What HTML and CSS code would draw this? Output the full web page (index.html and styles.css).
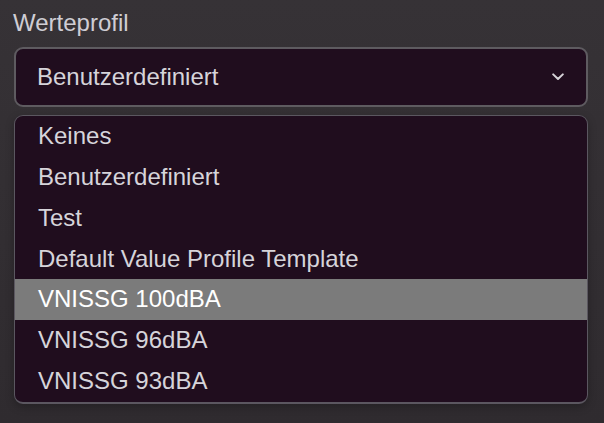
FILE: index.html
```html
<!DOCTYPE html>
<html lang="de">
<head>
<meta charset="utf-8">
<title>Werteprofil</title>
<link rel="stylesheet" href="styles.css">
</head>
<body>
<div class="field">
  <label class="field-label">Werteprofil</label>
  <div class="select">
    <span class="select-value">Benutzerdefiniert</span>
    <svg class="chevron" width="12" height="8" viewBox="0 0 12 8" aria-hidden="true">
      <path d="M1.2 1.4 L6 6 L10.8 1.4" fill="none" stroke="#d6d3d8" stroke-width="2" stroke-linecap="round" stroke-linejoin="round"/>
    </svg>
  </div>
  <ul class="menu">
    <li class="option">Keines</li>
    <li class="option">Benutzerdefiniert</li>
    <li class="option">Test</li>
    <li class="option">Default Value Profile Template</li>
    <li class="option active">VNISSG 100dBA</li>
    <li class="option">VNISSG 96dBA</li>
    <li class="option">VNISSG 93dBA</li>
  </ul>
</div>
</body>
</html>
```

FILE: styles.css
```css
html, body {
  margin: 0;
  padding: 0;
}
body {
  width: 604px;
  height: 423px;
  overflow: hidden;
  background: linear-gradient(#363236, #2f2b2f);
  font-family: "Liberation Sans", Arial, sans-serif;
  font-size: 24px;
  color: #d3d1d8;
}
.field {
  display: flex;
  flex-direction: column;
  padding: 9px 16px 0 14px;
}
.field-label {
  margin-left: -1px;
  color: #cfcdd4;
  line-height: 27px;
}
.select {
  margin-top: 11px;
  height: 60px;
  box-sizing: border-box;
  border: 2px solid #5e5b60;
  border-radius: 9px;
  background: #200d1e;
  display: flex;
  align-items: center;
  justify-content: space-between;
  padding: 0 22px 0 21px;
}
.select-value {
  color: #d6d4da;
}
.chevron {
  display: block;
  margin-top: -1px;
}
.menu {
  list-style: none;
  margin: 8px 0 0 0;
  padding: 0 0 1px 0;
  border: 1px solid #5b5760;
  border-bottom-width: 2px;
  border-radius: 9px;
  background: #200d1e;
  overflow: hidden;
  box-shadow: 0 3px 8px rgba(0,0,0,0.25);
}
.option {
  height: 40.75px;
  display: flex;
  align-items: center;
  padding-left: 23px;
  color: #d6d4da;
}
.option.active {
  background: #7b7b7b;
  color: #ffffff;
}
```
